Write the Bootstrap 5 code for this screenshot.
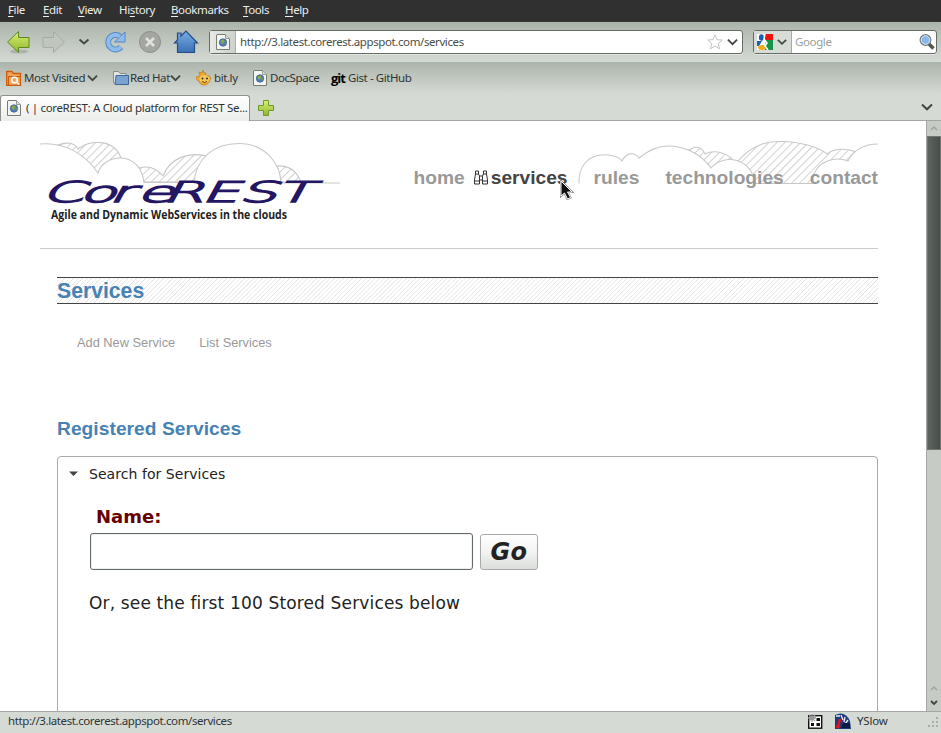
<!DOCTYPE html>
<html lang="en">
<head>
<meta charset="utf-8">
<title>coreREST: A Cloud platform for REST Services</title>
<link href="https://cdn.jsdelivr.net/npm/bootstrap@5.3.0/dist/css/bootstrap.min.css" rel="stylesheet">
<style>
body{width:941px;height:733px;overflow:hidden;font:11.5px/16px "Noto Sans","Open Sans",sans-serif;letter-spacing:-.38px;color:#2e3436;background:#fff}
svg{display:block;flex:none}
.menubar{height:22px;background:#303030;color:#eee;padding:0 0 2px 8px;border-bottom:1px solid #3a3833}
.menubar u{text-underline-offset:2px}
.menubar span:nth-child(1){width:35px}.menubar span:nth-child(2){width:35px}.menubar span:nth-child(3){width:41px}
.menubar span:nth-child(4){width:52px}.menubar span:nth-child(5){width:72px}.menubar span:nth-child(6){width:42px}
.toolbar-main{height:40px;background:linear-gradient(#abb4ab,#d5dad4)}
.field{height:24px;background:#fff;border:1px solid #666b66;border-radius:3px;box-shadow:0 1px 0 #e4e8e3}
.address{width:534px}
.url{letter-spacing:-.4px}
.address .url{color:#4a4e4a}
.site-id{width:26px;height:22px;background:linear-gradient(90deg,#e6e9e5,#cdd2cc);border-right:1px solid #aab0a9;padding-left:6px}
.searchbox{width:184px;margin-left:10px}
.engine{width:38px;height:22px;background:#d8dcd7;border-right:1px solid #a6aca5;padding-left:3px}
.hint{color:#9a9f9a;margin-left:3px}
.bookmarks{height:32px;background:linear-gradient(#abb4ab,#d5dad4);padding-left:6px}
.bm{white-space:nowrap;letter-spacing:-.42px}
.bm-a{margin-left:2px;width:64px}.bm-v{margin-left:-1px}.bm-i{margin-left:15px}.bm-b{margin-left:1px;width:41px}.bm-c{margin-left:2px;width:39px}.bm-e{margin-left:3px;width:61px}
.gitmark{color:#000;width:17px;font:700 13px/16px "Open Sans",sans-serif;letter-spacing:-1px}
.tabs{height:27px;background:#d5dad4;border-bottom:1px solid #a3a9a2}
.page-tab{width:250px;height:26px;margin-top:1px;border:1px solid #8c918b;border-bottom:0;border-radius:3px 3px 0 0;background:linear-gradient(#fff,#eceeeb);padding-left:6px}
.tabtext{letter-spacing:-.33px;padding-left:1px}
.viewport{height:590px}
.page{width:926px;overflow:hidden;font-family:"Liberation Sans",Arial,sans-serif;letter-spacing:0}
.masthead{height:128px;margin:0 48px 0 40px;border-bottom:1px solid #ccc}
.clouds{position:absolute;left:0;top:0}
.mainnav{position:relative;padding-top:45px;gap:26px;font-size:19.2px;line-height:24px;font-weight:700;color:#999}
.mainnav .active{color:#444;position:relative}
.mainnav .binoculars{position:absolute;left:-17px;top:4px}
.mainnav .pointer{position:absolute;left:69px;top:14px}
.inner{margin:28px 48px 0 57px}
.titlebar{height:27px;border:solid #444;border-width:1px 0;margin:0;font-size:21.2px;line-height:26px;font-weight:700;color:#4682b4;background:repeating-linear-gradient(135deg,#fff 0 2.100px,#e0e0e0 2.500px,#fff 3.180px)}
.sublinks{padding:30px 0 0 20px;gap:24px;font-size:12.8px;line-height:18px;color:#999}
.section-title{font-size:19.2px;line-height:24px;font-weight:700;color:#4682b4;margin:65px 0 15px;letter-spacing:.04px}
.panel{height:300px;border:1px solid #aaa;border-radius:4px;font-family:"DejaVu Sans",Verdana,sans-serif;color:#222}
.panel-head{height:34px;font-size:14px;padding-left:11px;gap:11px;letter-spacing:.05px}
.panel-body{padding:15px 0 0 31px}
.name-label{font-size:18px;line-height:22px;font-weight:700;color:#600;padding-left:7px;margin-bottom:4px}
.name-input{width:383px;height:37px;border:1px solid #626a66;border-radius:3px;padding:0;margin-left:1px;box-shadow:inset 0 0 0 1px #eef0ee}
.go{width:58px;height:36px;border:1px solid #aaa;border-radius:3px;background:linear-gradient(#fff,#f2f3f2 50%,#dadeda);font:italic 700 24px/30px "DejaVu Sans",sans-serif;letter-spacing:.4px;padding:0;margin-left:7px;margin-top:2px;color:#222}
.note{font-size:17px;line-height:22px;margin-top:22px;letter-spacing:.15px}
.scroll{width:15px;background:#c6ccc5;border-left:1px solid #a4aaa3}
.thumb{height:314px;background:linear-gradient(90deg,#5d635e,#484d48);border:1px solid #6f7570}
.status{height:22px;background:#d5dad4;border-top:1px solid #a3a9a2;padding:0 2px 3px 8px}
.gauge{margin-left:12px}.yslow{margin-left:6px;width:68px;letter-spacing:-.2px}
</style>
<script src="https://cdn.jsdelivr.net/npm/bootstrap@5.3.0/dist/js/bootstrap.bundle.min.js"></script>
</head>
<body class="d-flex flex-column">
<svg width="0" height="0" class="position-absolute">
<defs>
<symbol id="doc" viewBox="0 0 14 16"><path d="M1 .5H9.500L13.500 4.500V15.500H.5V1Z" fill="#f4f5f3" stroke="#777c77"/><path d="M9.500 .5V4.500H13.500" fill="#ddd" stroke="#999"/><circle cx="7" cy="8.500" r="3.700" fill="#4f7fb8" stroke="#3a5f86" stroke-width=".8"/><path d="M5 6L8 5.500 8.500 8 6.500 10 4.500 8ZM9 9l1.500-1-.5 2.500z" fill="#8aa84a"/></symbol>
<symbol id="chev" viewBox="0 0 12 8"><path d="M1 1.500 6 6.300 11 1.500" fill="none" stroke="#41463f" stroke-width="2"/></symbol>
<pattern id="hatch" width="5.600" height="5.600" patternUnits="userSpaceOnUse" patternTransform="rotate(45)"><rect width="5.600" height="5.600" fill="#fff"/><path d="M.5 0V5.600" stroke="#ccc" stroke-width=".9"/></pattern>
<linearGradient id="green" x2="0" y2="1"><stop stop-color="#d9ee78"/><stop offset="1" stop-color="#8fb82b"/></linearGradient>
<linearGradient id="blue" x2="0" y2="1"><stop stop-color="#7aaee4"/><stop offset="1" stop-color="#3a70b4"/></linearGradient>
</defs>
</svg>

<div class="menubar d-flex align-items-center flex-shrink-0"><span><u>F</u>ile</span><span><u>E</u>dit</span><span><u>V</u>iew</span><span>Hi<u>s</u>tory</span><span><u>B</u>ookmarks</span><span><u>T</u>ools</span><span><u>H</u>elp</span></div>

<div class="toolbar-main d-flex align-items-center flex-shrink-0">
<svg width="209" height="40" viewBox="0 22 209 40">
<ellipse cx="19" cy="51.500" rx="9" ry="2" fill="#8d948d" opacity=".5"/>
<path d="M7.500 42 18.500 31.500V37.500H29V47.500H18.500V52.500Z" fill="url(#green)" stroke="#5c8a20"/>
<path d="M64.500 42 53.500 31.500V37.500H43V47.500H53.500V52.500Z" fill="#c0c5be" stroke="#a7ada5"/>
<path d="M79.500 39.500 84 43.500 88.500 39.500" fill="none" stroke="#454944" stroke-width="2"/>
<path d="M120 36.500A7.300 7.300 0 1 0 121 47" fill="none" stroke="#5288c2" stroke-width="6"/><path d="M125 32V42H114.500Z" fill="#8fbcea" stroke="#5288c2"/><path d="M120 36.500A7.300 7.300 0 1 0 121 47" fill="none" stroke="#8fbcea" stroke-width="4"/>
<circle cx="150" cy="42" r="10.500" fill="#a4a6a2" stroke="#8c8f8b"/><path d="M146 38 154 46M154 38 146 46" stroke="#e0e2df" stroke-width="2.500"/>
<path d="M174.500 43 177.500 40V33H181V36L186 31 197.500 43H194.500V52.500H177.500V43Z" fill="url(#blue)" stroke="#244c85" stroke-width="1.200"/>
</svg>
<div class="address field d-flex align-items-center"><div class="site-id d-flex align-items-center"><svg width="14" height="16"><use href="#doc"/></svg></div><span class="url ms-1 flex-grow-1">http://3.latest.corerest.appspot.com/services</span>
<svg width="16" height="16" viewBox="0 0 16 16"><path d="M8 .8 10 5.700 15.300 6 11.200 9.500 12.600 14.800 8 12 3.400 14.800 4.800 9.500.7 6 6 5.700Z" fill="#fff" stroke="#c2c4c1"/></svg><svg class="ms-1 me-1" width="11" height="8"><use href="#chev"/></svg></div>
<div class="searchbox field d-flex align-items-center"><div class="engine d-flex align-items-center"><svg width="16" height="16" viewBox="0 0 16 16"><path d="M8 0H16V6H8Z" fill="#e11"/><path d="M9 6H16V16H8Z" fill="#169447"/><rect width="8" height="16" fill="#fff"/><path d="M0 7H5L2 12H0Z" fill="#1c5fb8"/><ellipse cx="4.500" cy="3.500" rx="2.600" ry="3.200" fill="#1c5fb8"/><ellipse cx="5" cy="13.500" rx="4" ry="2.500" fill="#efad19"/><path d="M8 0 7 5 10 9 8 12 11 16" fill="none" stroke="#fff" stroke-width="1.500"/></svg><svg class="ms-1" width="10" height="8"><use href="#chev"/></svg></div><span class="hint flex-grow-1">Google</span>
<svg width="18" height="18" viewBox="0 0 18 18"><path d="M10 10 15.500 15.500" stroke="#555" stroke-width="3.500"/><circle cx="7.500" cy="7" r="5.200" fill="#86b7ec" stroke="#777" stroke-width="1.500"/><circle cx="7.500" cy="7" r="4.300" fill="none" stroke="#dce9f7"/></svg></div>
</div>

<div class="bookmarks d-flex align-items-center flex-shrink-0">
<svg width="16" height="16" viewBox="0 0 16 16"><path d="M.7 15.300V1.500H6L7.500 3.500H14.500V15.300Z" fill="#f0a45e" stroke="#cc5c0a" stroke-width="1.300"/><path d="M2.500 15V6.500H15" fill="none" stroke="#cc5c0a"/><circle cx="8.500" cy="10" r="2.800" fill="none" stroke="#fff" stroke-width="1.400"/><path d="M10.500 12 13 14.500" stroke="#fff" stroke-width="1.600"/></svg>
<span class="bm bm-a">Most Visited</span><svg class="bm-v" width="11" height="8"><use href="#chev"/></svg>
<svg class="bm-i" width="16" height="16" viewBox="0 0 16 16"><path d="M.5 13V1.500H5.500L7 3.500H13V13Z" fill="#e4e6e4" stroke="#888e8b"/><path d="M3 5.500H15.500V14.500H2Z" fill="#7ba3d2" stroke="#3e689c"/></svg>
<span class="bm bm-b">Red Hat</span><svg class="bm-v" width="11" height="8"><use href="#chev"/></svg>
<svg class="bm-i" width="16" height="16" viewBox="0 0 16 16"><path d="M0 7 4 6 3 2 6 3 7 0 8 3 10 3 9 5C14 5 16 8 14 10 13 16 4 17 3 11 1 11 0 9 0 7Z" fill="#f2a72b" stroke="#b87414" stroke-width=".6"/><ellipse cx="8.500" cy="9" rx="5" ry="4" fill="#f9c75e"/><circle cx="6.500" cy="8.500" r="1" fill="#333"/><circle cx="11" cy="8.500" r="1" fill="#333"/><path d="M6 11.500Q8.500 13.500 11 11.500" stroke="#704000" fill="none"/></svg>
<span class="bm bm-c">bit.ly</span>
<svg width="14" height="16"><use href="#doc"/></svg>
<span class="bm bm-e">DocSpace</span><b class="gitmark">git</b><span class="bm">Gist - GitHub</span>
</div>

<div class="tabs d-flex align-items-center flex-shrink-0">
<div class="page-tab d-flex align-items-center text-nowrap"><svg width="14" height="16"><use href="#doc"/></svg><span class="tabtext ms-1">( | coreREST: A Cloud platform for REST Se...</span></div>
<svg class="ms-2" width="16" height="17" viewBox="0 -1 16 17"><path d="M5.500.5H10.500V5.500H15.500V10.500H10.500V15.500H5.500V10.500H.5V5.500H5.500Z" fill="url(#green)" stroke="#6f9a25"/></svg>
<svg class="ms-auto me-2" width="12" height="8"><use href="#chev"/></svg>
</div>

<div class="viewport d-flex flex-shrink-0">
<main class="page position-relative">
<svg class="clouds" width="926" height="127" viewBox="0 121 926 127">
<g stroke="#c8c8c8" stroke-width="1.100" fill="url(#hatch)">
<path d="M58 145C65 142 75 142 78 149C88 140 114 138 121 158L98 173Z"/>
<path d="M139 168C150 165 158 170 163 176C170 157 190 152 206 156L194 182H144Z"/>
<path d="M277 166C290 165 297 172 301 182H281Z"/>
<path fill="#fff" stroke="none" d="M40 144C65 142 85 154 98 173C103 154 140 149 144 182.500H194C196 158 214 143.500 239 143.500C262 143.500 280 160 281 183H40Z"/>
<path fill="none" d="M40 144C65 142 85 154 98 173C103 154 140 149 144 182.500H194C196 158 214 143.500 239 143.500C262 143.500 280 160 281 183H340"/>
<path d="M689 150C696 145 702 147 705 154C712 150 724 151 732 159L711 168Z"/>
<path d="M738 161C755 141 773 141.500 780 141.500C800 141 820 148 827 154C835 147 850 149 855 152L848 161L812 183.500H755Z"/>
<path fill="#fff" d="M579 183.500C578 148 616 152 622 161C626 153 634 151 639 158C650 149 660 146 668 146C685 146 701 154 711 168C724 153 752 158 755 183.500Z" stroke="none"/>
<path fill="none" d="M579 183.500C578 148 616 152 622 161C626 153 634 151 639 158C650 149 660 146 668 146C685 146 701 154 711 168C724 153 752 158 755 183.500H812"/>
<path fill="#fff" d="M812 183.500C814 158 838 157 848 161C853 150 865 144 878 144V183.500" stroke="none"/>
<path fill="none" d="M812 183.500C814 158 838 157 848 161C853 150 865 144 878 144"/>
</g>
<text transform="translate(0 201.500) skewX(-29) scale(2.100 1)" x="19.500 37.500 51.500 65 77 95.500 113.500 131" y="0" font-family="DejaVu Sans" font-weight="200" font-size="28.500" fill="#241663" stroke="#241663" stroke-width="1.500">CoreREST</text>
<text x="51" y="219" font-family="Open Sans, sans-serif" font-weight="700" font-size="12.500" fill="#222" textLength="236" lengthAdjust="spacingAndGlyphs">Agile and Dynamic WebServices in the clouds</text>
</svg>
<header class="masthead"><nav class="mainnav d-flex justify-content-end"><span>home</span><span class="active"><svg class="binoculars" width="14" height="15" viewBox="0 0 14 15"><path d="M1.500 1V4L.5 10V14H5.500V10H8.500V14H13.500V10L12.500 4V1H9.500V4L8.500 6H5.500L4.500 4V1ZM.5 11H5.500M8.500 11H13.500M1.500 4H4.500M9.500 4H12.500M5.500 6V10M8.500 6V10" fill="#fff" stroke="#333"/></svg>services<svg class="pointer" width="14" height="20" viewBox="0 0 14 20"><path d="M1 1V16L4.500 13 7.500 19 10.500 17.500 7.500 12H12Z" fill="#111" stroke="#888" stroke-width="2"/><path d="M1 1V16L4.500 13 7.500 19 10.500 17.500 7.500 12H12Z" fill="#111" stroke="#fff"/></svg></span><span>rules</span><span>technologies</span><span>contact</span></nav></header>
<section class="inner">
<h1 class="titlebar">Services</h1>
<div class="sublinks d-flex"><span>Add New Service</span><span>List Services</span></div>
<h2 class="section-title">Registered Services</h2>
<div class="panel">
<div class="panel-head d-flex align-items-center"><svg width="9" height="6" viewBox="0 0 9 6"><path d="M0 .5H9L4.500 5Z" fill="#444"/></svg><span>Search for Services</span></div>
<div class="panel-body"><label class="name-label d-block">Name:</label><div class="d-flex align-items-center"><input class="name-input"><button class="go">Go</button></div><p class="note">Or, see the first 100 Stored Services below</p></div>
</div>
</section>
</main>
<div class="scroll d-flex flex-column"><svg width="14" height="15" viewBox="0 0 14 15"><path d="M4 9 7 6 10 9" fill="none" stroke="#9fa59e" stroke-width="1.500"/></svg><div class="thumb"></div><svg class="mt-auto" width="14" height="32" viewBox="0 0 14 32"><path d="M4 11 7 8 10 11" fill="none" stroke="#9fa59e" stroke-width="1.500"/><path d="M4 22 7 25 10 22" fill="none" stroke="#41463f" stroke-width="1.800"/></svg></div>
</div>

<footer class="status d-flex align-items-center flex-shrink-0"><span class="flex-grow-1 url">http://3.latest.corerest.appspot.com/services</span>
<svg width="15" height="15" viewBox="0 0 15 15"><rect x=".7" y="1.700" width="13" height="12.500" fill="#fff" stroke="#111" stroke-width="1.400"/><path d="M3 9H6V12H3ZM8.500 9H12V12H8.500ZM8.500 4H12V7H8.500Z" fill="#111"/><path d="M4 0V8M0 4H8M1 1 7 7M7 1 1 7" stroke="#999" stroke-width="1.300"/></svg>
<svg class="gauge" width="16" height="16" viewBox="0 0 16 16"><path d="M0 2Q10-3 15 8L16 16H0Z" fill="#1d3b7c"/><path d="M1 3 5 3M6 2 8 7M10 4 9 9M13 7 10 11" stroke="#e9eef7" stroke-width="1.300"/><path d="M8 10H15V15H6Z" fill="#0a1b48"/><path d="M5 6 3 14" stroke="#e11" stroke-width="2.500"/><circle cx="3" cy="13.500" r="2" fill="#e11"/></svg>
<span class="yslow">YSlow</span>
<svg width="14" height="16" viewBox="0 0 14 16"><path d="M12 4v2M8 8v2M12 8v2M4 12v2M8 12v2M12 12v2" stroke="#aab0a9" stroke-width="2"/></svg></footer>
</body>
</html>
